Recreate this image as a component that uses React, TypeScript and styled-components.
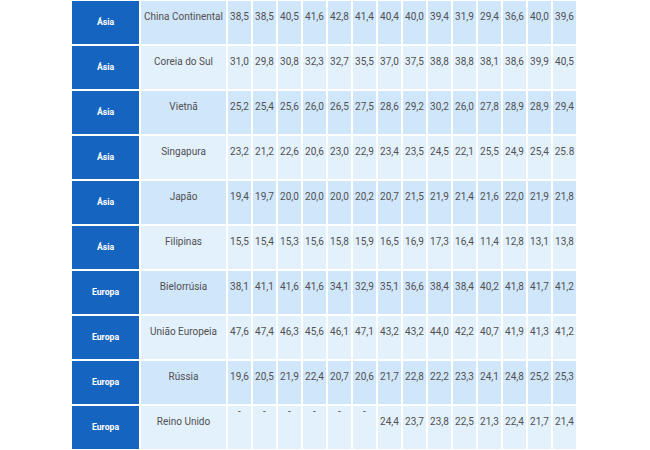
import React from "react"
import styled, { createGlobalStyle } from "styled-components"

const GlobalStyle = createGlobalStyle`
  html, body {
    margin: 0;
    padding: 0;
    background: #ffffff;
  }
  body {
    font-family: Roboto, "Liberation Sans", Arial, sans-serif;
  }
`

const Page = styled.div`
  width: 650px;
  height: 450px;
  overflow: hidden;
  padding: 1px 0 0 72px;
  box-sizing: border-box;
`

const Table = styled.div`
  display: grid;
  grid-template-columns: 67px 85px repeat(14, 23px);
  grid-auto-rows: 43px;
  gap: 2px;
`

const Row = styled.div<{ $odd: boolean }>`
  display: contents;
  --row-bg: ${(p) => (p.$odd ? "#d0e6fb" : "#e3f1fd")};
`

const Region = styled.div`
  display: flex;
  align-items: center;
  justify-content: center;
  padding-bottom: 2px;
  background: #1565c0;
  color: #ffffff;
  font-size: 8.7px;
  font-weight: 700;
`

const Cell = styled.div<{ $empty?: boolean }>`
  display: flex;
  align-items: ${(p) => (p.$empty ? "flex-start" : "center")};
  justify-content: center;
  padding: ${(p) => (p.$empty ? "0" : "0 0 11px")};
  line-height: ${(p) => (p.$empty ? "12px" : "14px")};
  background: var(--row-bg);
  color: #505050;
  font-size: 10px;
  white-space: nowrap;
`

interface IRow {
  region: string
  country: string
  values: string[]
}

const rows: IRow[] = [
  { region: "Ásia", country: "China Continental", values: "38,5 38,5 40,5 41,6 42,8 41,4 40,4 40,0 39,4 31,9 29,4 36,6 40,0 39,6".split(" ") },
  { region: "Ásia", country: "Coreia do Sul", values: "31,0 29,8 30,8 32,3 32,7 35,5 37,0 37,5 38,8 38,8 38,1 38,6 39,9 40,5".split(" ") },
  { region: "Ásia", country: "Vietnã", values: "25,2 25,4 25,6 26,0 26,5 27,5 28,6 29,2 30,2 26,0 27,8 28,9 28,9 29,4".split(" ") },
  { region: "Ásia", country: "Singapura", values: "23,2 21,2 22,6 20,6 23,0 22,9 23,4 23,5 24,5 22,1 25,5 24,9 25,4 25.8".split(" ") },
  { region: "Ásia", country: "Japão", values: "19,4 19,7 20,0 20,0 20,0 20,2 20,7 21,5 21,9 21,4 21,6 22,0 21,9 21,8".split(" ") },
  { region: "Ásia", country: "Filipinas", values: "15,5 15,4 15,3 15,6 15,8 15,9 16,5 16,9 17,3 16,4 11,4 12,8 13,1 13,8".split(" ") },
  { region: "Europa", country: "Bielorrúsia", values: "38,1 41,1 41,6 41,6 34,1 32,9 35,1 36,6 38,4 38,4 40,2 41,8 41,7 41,2".split(" ") },
  { region: "Europa", country: "União Europeia", values: "47,6 47,4 46,3 45,6 46,1 47,1 43,2 43,2 44,0 42,2 40,7 41,9 41,3 41,2".split(" ") },
  { region: "Europa", country: "Rússia", values: "19,6 20,5 21,9 22,4 20,7 20,6 21,7 22,8 22,2 23,3 24,1 24,8 25,2 25,3".split(" ") },
  { region: "Europa", country: "Reino Unido", values: "- - - - - - 24,4 23,7 23,8 22,5 21,3 22,4 21,7 21,4".split(" ") },
]

export default function App() {
  return (
    <>
      <GlobalStyle />
      <Page>
        <Table>
          {rows.map((row, i) => (
            <Row key={row.country} $odd={i % 2 === 0}>
              <Region>{row.region}</Region>
              <Cell>{row.country}</Cell>
              {row.values.map((v, j) => (
                <Cell key={j} $empty={v === "-"}>
                  {v}
                </Cell>
              ))}
            </Row>
          ))}
        </Table>
      </Page>
    </>
  )
}
